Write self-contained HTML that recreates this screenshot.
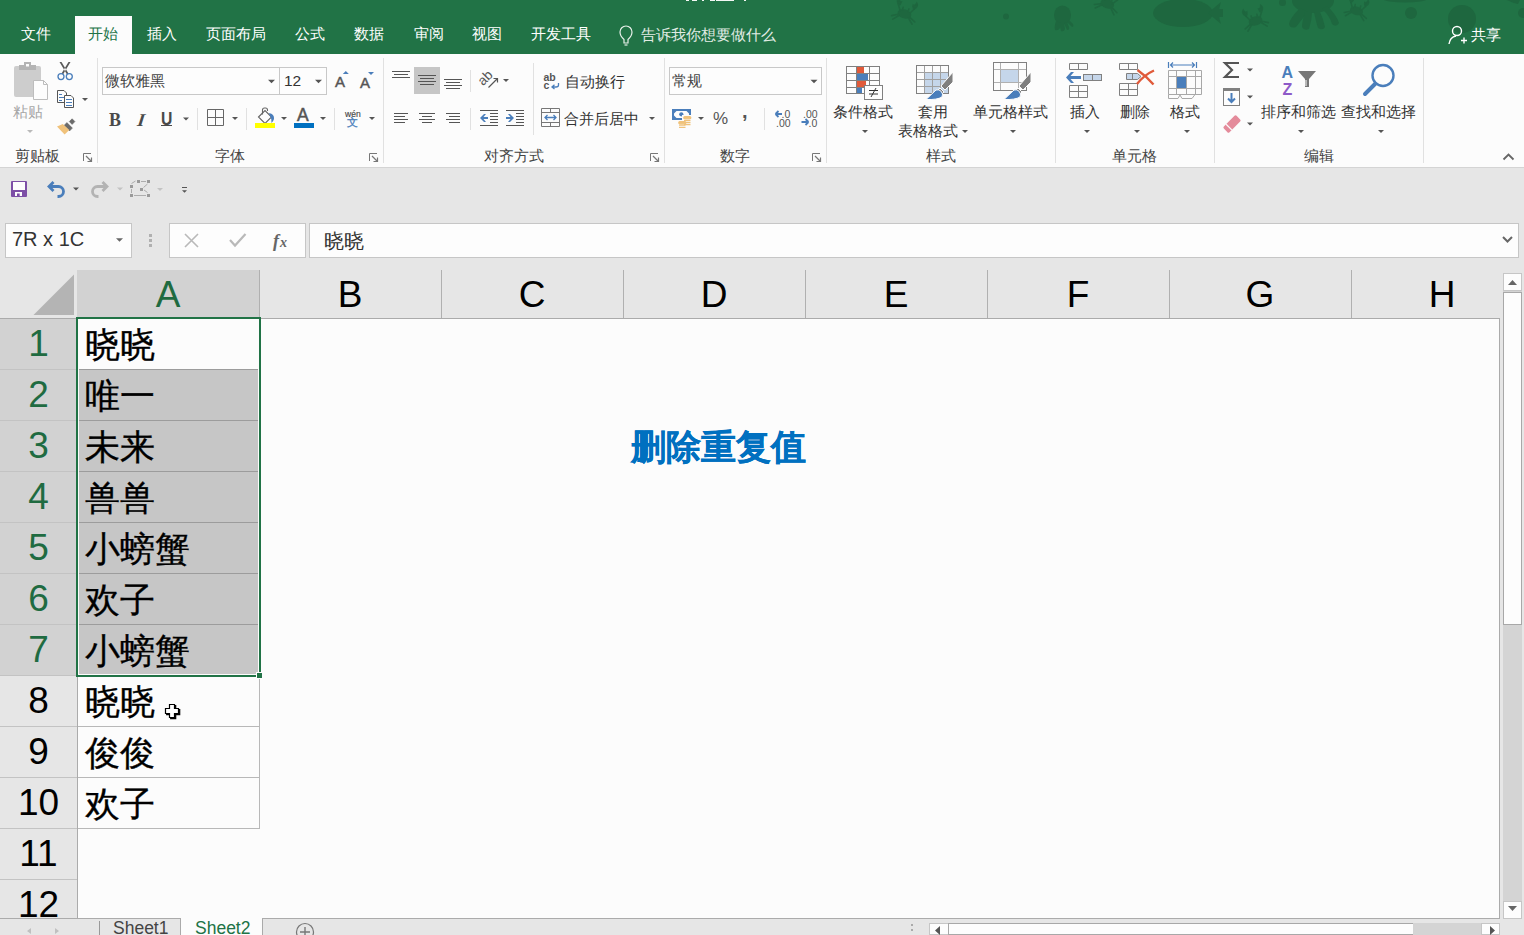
<!DOCTYPE html><html><head><meta charset="utf-8"><style>
html,body{margin:0;padding:0;width:1524px;height:935px;overflow:hidden;background:#e6e6e6;font-family:"Liberation Sans",sans-serif;}
.t{position:absolute;white-space:nowrap;line-height:1;}
.b{position:absolute;box-sizing:border-box;}
svg{position:absolute;left:0;top:0;}
</style></head><body>
<div class="b" style="left:0px;top:0px;width:1524px;height:54px;background:#217346"></div>
<div class="b" style="left:75px;top:16px;width:57px;height:38px;background:#fcfcfc"></div>
<div class="t" style="left:21px;top:26px;font-size:15px;color:#fff;font-weight:normal;">文件</div>
<div class="t" style="left:88px;top:26px;font-size:15px;color:#217346;font-weight:normal;">开始</div>
<div class="t" style="left:147px;top:26px;font-size:15px;color:#fff;font-weight:normal;">插入</div>
<div class="t" style="left:206px;top:26px;font-size:15px;color:#fff;font-weight:normal;">页面布局</div>
<div class="t" style="left:295px;top:26px;font-size:15px;color:#fff;font-weight:normal;">公式</div>
<div class="t" style="left:354px;top:26px;font-size:15px;color:#fff;font-weight:normal;">数据</div>
<div class="t" style="left:414px;top:26px;font-size:15px;color:#fff;font-weight:normal;">审阅</div>
<div class="t" style="left:472px;top:26px;font-size:15px;color:#fff;font-weight:normal;">视图</div>
<div class="t" style="left:531px;top:26px;font-size:15px;color:#fff;font-weight:normal;">开发工具</div>
<div class="t" style="left:641px;top:27px;font-size:15px;color:#e2ece5;font-weight:normal;">告诉我你想要做什么</div>
<div class="t" style="left:1471px;top:27px;font-size:15px;color:#fff;font-weight:normal;">共享</div>
<div class="b" style="left:686px;top:0px;width:3px;height:1.2px;background:#f4f8f5"></div>
<div class="b" style="left:692px;top:0px;width:5px;height:1.2px;background:#f4f8f5"></div>
<div class="b" style="left:702px;top:0px;width:2px;height:1.2px;background:#f4f8f5"></div>
<div class="b" style="left:710px;top:0px;width:5px;height:1.2px;background:#f4f8f5"></div>
<div class="b" style="left:716px;top:0px;width:18px;height:1.2px;background:#f4f8f5"></div>
<div class="b" style="left:744px;top:0px;width:2px;height:1.2px;background:#f4f8f5"></div>
<div class="b" style="left:0px;top:54px;width:1524px;height:114px;background:#fcfcfc;border-bottom:1px solid #d4d4d4"></div>
<div class="b" style="left:97px;top:58px;width:1px;height:105px;background:#e1e1e1"></div>
<div class="b" style="left:383px;top:58px;width:1px;height:105px;background:#e1e1e1"></div>
<div class="b" style="left:664px;top:58px;width:1px;height:105px;background:#e1e1e1"></div>
<div class="b" style="left:826px;top:58px;width:1px;height:105px;background:#e1e1e1"></div>
<div class="b" style="left:1055px;top:58px;width:1px;height:105px;background:#e1e1e1"></div>
<div class="b" style="left:1214px;top:58px;width:1px;height:105px;background:#e1e1e1"></div>
<div class="b" style="left:1423px;top:58px;width:1px;height:105px;background:#e1e1e1"></div>
<div class="t" style="left:15px;top:148px;font-size:15px;color:#444;font-weight:normal;">剪贴板</div>
<div class="t" style="left:215px;top:148px;font-size:15px;color:#444;font-weight:normal;">字体</div>
<div class="t" style="left:484px;top:148px;font-size:15px;color:#444;font-weight:normal;">对齐方式</div>
<div class="t" style="left:720px;top:148px;font-size:15px;color:#444;font-weight:normal;">数字</div>
<div class="t" style="left:926px;top:148px;font-size:15px;color:#444;font-weight:normal;">样式</div>
<div class="t" style="left:1112px;top:148px;font-size:15px;color:#444;font-weight:normal;">单元格</div>
<div class="t" style="left:1304px;top:148px;font-size:15px;color:#444;font-weight:normal;">编辑</div>
<div class="t" style="left:13px;top:104px;font-size:15px;color:#a6a6a6;font-weight:normal;">粘贴</div>
<div class="b" style="left:102px;top:67px;width:179px;height:28px;background:#fdfdfd;border:1px solid #c8c8c8"></div>
<div class="b" style="left:279px;top:67px;width:48px;height:28px;background:#fdfdfd;border:1px solid #c8c8c8"></div>
<div class="t" style="left:105px;top:73px;font-size:15px;color:#444;font-weight:normal;">微软雅黑</div>
<div class="t" style="left:284px;top:73px;font-size:15.5px;color:#333;font-weight:normal;">12</div>
<div class="t" style="left:335px;top:74px;font-size:15px;color:#555;font-weight:normal;-webkit-text-stroke:0.45px #555">A</div>
<div class="t" style="left:360px;top:75px;font-size:15px;color:#555;font-weight:normal;-webkit-text-stroke:0.45px #555">A</div>
<div class="t" style="left:109px;top:111px;font-size:18px;color:#4a4a4a;font-weight:bold;font-family:&quot;Liberation Serif&quot;,serif">B</div>
<div class="t" style="left:138px;top:111px;font-size:18px;color:#4a4a4a;font-weight:bold;font-family:&quot;Liberation Serif&quot;,serif;transform:skewX(-18deg)">I</div>
<div class="t" style="left:161px;top:111px;font-size:17.5px;color:#4a4a4a;font-weight:bold;font-family:&quot;Liberation Sans&quot;,sans-serif;transform:scaleX(0.9);transform-origin:left">U</div>
<div class="b" style="left:161px;top:125px;width:11px;height:1.4px;background:#4a4a4a"></div>
<div class="t" style="left:297px;top:107px;font-size:17.5px;color:#555;font-weight:normal;-webkit-text-stroke:0.5px #555">A</div>
<div class="t" style="left:344.5px;top:108.5px;font-size:9.5px;color:#444;font-weight:normal;transform:scaleX(0.9);transform-origin:left;-webkit-text-stroke:0.15px #444">wén</div>
<div class="t" style="left:346.8px;top:117.3px;font-size:11px;color:#4a7ebb;font-weight:500;-webkit-text-stroke:0.3px #4a7ebb">文</div>
<div class="t" style="left:565px;top:74px;font-size:15px;color:#333;font-weight:normal;">自动换行</div>
<div class="t" style="left:564px;top:111px;font-size:15px;color:#333;font-weight:normal;">合并后居中</div>
<div class="b" style="left:669px;top:67px;width:153px;height:28px;background:#fdfdfd;border:1px solid #c8c8c8"></div>
<div class="t" style="left:672px;top:73px;font-size:15px;color:#444;font-weight:normal;">常规</div>
<div class="t" style="left:713px;top:110px;font-size:17px;color:#555;font-weight:normal;">%</div>
<div class="t" style="left:742px;top:101px;font-size:20px;color:#555;font-weight:bold;">,</div>
<div class="t" style="left:833px;top:104px;font-size:15px;color:#333;font-weight:normal;">条件格式</div>
<div class="t" style="left:918px;top:104px;font-size:15px;color:#333;font-weight:normal;">套用</div>
<div class="t" style="left:898px;top:123px;font-size:15px;color:#333;font-weight:normal;">表格格式</div>
<div class="t" style="left:973px;top:104px;font-size:15px;color:#333;font-weight:normal;">单元格样式</div>
<div class="t" style="left:1070px;top:104px;font-size:15px;color:#333;font-weight:normal;">插入</div>
<div class="t" style="left:1120px;top:104px;font-size:15px;color:#333;font-weight:normal;">删除</div>
<div class="t" style="left:1170px;top:104px;font-size:15px;color:#333;font-weight:normal;">格式</div>
<div class="t" style="left:1261px;top:104px;font-size:15px;color:#333;font-weight:normal;">排序和筛选</div>
<div class="t" style="left:1341px;top:104px;font-size:15px;color:#333;font-weight:normal;">查找和选择</div>
<div class="b" style="left:5px;top:223px;width:127px;height:35px;background:#fdfdfd;border:1px solid #c6c6c6"></div>
<div class="t" style="left:12px;top:229px;font-size:20px;color:#333;font-weight:normal;">7R x 1C</div>
<div class="b" style="left:169px;top:223px;width:137px;height:35px;background:#fdfdfd;border:1px solid #c6c6c6"></div>
<div class="b" style="left:309px;top:223px;width:1210px;height:35px;background:#fdfdfd;border:1px solid #c6c6c6"></div>
<div class="t" style="left:324px;top:231px;font-size:20px;color:#333;font-weight:normal;">晓晓</div>
<div class="b" style="left:0px;top:270px;width:1500px;height:48px;background:#e6e6e6"></div>
<div class="b" style="left:77px;top:270px;width:183px;height:48px;background:#d2d2d2"></div>
<svg width="80" height="320" style="position:absolute;left:0;top:0"><path d="M74 274.5 V315 H33.5 Z" fill="#b4b4b4"/></svg>
<div class="b" style="left:0px;top:318px;width:1500px;height:1px;background:#ababab"></div>
<div class="t" style="left:77px;width:182px;text-align:center;top:276px;font-size:37px;color:#1f6b41">A</div>
<div class="b" style="left:259px;top:270px;width:1px;height:48px;background:#b0b0b0"></div>
<div class="t" style="left:259px;width:182px;text-align:center;top:276px;font-size:37px;color:#000">B</div>
<div class="b" style="left:441px;top:270px;width:1px;height:48px;background:#b0b0b0"></div>
<div class="t" style="left:441px;width:182px;text-align:center;top:276px;font-size:37px;color:#000">C</div>
<div class="b" style="left:623px;top:270px;width:1px;height:48px;background:#b0b0b0"></div>
<div class="t" style="left:623px;width:182px;text-align:center;top:276px;font-size:37px;color:#000">D</div>
<div class="b" style="left:805px;top:270px;width:1px;height:48px;background:#b0b0b0"></div>
<div class="t" style="left:805px;width:182px;text-align:center;top:276px;font-size:37px;color:#000">E</div>
<div class="b" style="left:987px;top:270px;width:1px;height:48px;background:#b0b0b0"></div>
<div class="t" style="left:987px;width:182px;text-align:center;top:276px;font-size:37px;color:#000">F</div>
<div class="b" style="left:1169px;top:270px;width:1px;height:48px;background:#b0b0b0"></div>
<div class="t" style="left:1169px;width:182px;text-align:center;top:276px;font-size:37px;color:#000">G</div>
<div class="b" style="left:1351px;top:270px;width:1px;height:48px;background:#b0b0b0"></div>
<div class="t" style="left:1351px;width:182px;text-align:center;top:276px;font-size:37px;color:#000">H</div>
<div class="b" style="left:78px;top:319px;width:1422px;height:599px;background:#fcfcfc"></div>
<div class="b" style="left:1499px;top:318px;width:1px;height:600px;background:#ababab"></div>
<div class="b" style="left:0px;top:319px;width:77px;height:51px;background:#d2d2d2;border-bottom:1px solid #c3c3c3"></div>
<div class="t" style="left:0px;width:77px;text-align:center;top:325px;font-size:37px;color:#1f6b41">1</div>
<div class="b" style="left:0px;top:370px;width:77px;height:51px;background:#d2d2d2;border-bottom:1px solid #c3c3c3"></div>
<div class="t" style="left:0px;width:77px;text-align:center;top:376px;font-size:37px;color:#1f6b41">2</div>
<div class="b" style="left:0px;top:421px;width:77px;height:51px;background:#d2d2d2;border-bottom:1px solid #c3c3c3"></div>
<div class="t" style="left:0px;width:77px;text-align:center;top:427px;font-size:37px;color:#1f6b41">3</div>
<div class="b" style="left:0px;top:472px;width:77px;height:51px;background:#d2d2d2;border-bottom:1px solid #c3c3c3"></div>
<div class="t" style="left:0px;width:77px;text-align:center;top:478px;font-size:37px;color:#1f6b41">4</div>
<div class="b" style="left:0px;top:523px;width:77px;height:51px;background:#d2d2d2;border-bottom:1px solid #c3c3c3"></div>
<div class="t" style="left:0px;width:77px;text-align:center;top:529px;font-size:37px;color:#1f6b41">5</div>
<div class="b" style="left:0px;top:574px;width:77px;height:51px;background:#d2d2d2;border-bottom:1px solid #c3c3c3"></div>
<div class="t" style="left:0px;width:77px;text-align:center;top:580px;font-size:37px;color:#1f6b41">6</div>
<div class="b" style="left:0px;top:625px;width:77px;height:51px;background:#d2d2d2;border-bottom:1px solid #c3c3c3"></div>
<div class="t" style="left:0px;width:77px;text-align:center;top:631px;font-size:37px;color:#1f6b41">7</div>
<div class="b" style="left:0px;top:676px;width:77px;height:51px;background:#e6e6e6;border-bottom:1px solid #c3c3c3"></div>
<div class="t" style="left:0px;width:77px;text-align:center;top:682px;font-size:37px;color:#000">8</div>
<div class="b" style="left:0px;top:727px;width:77px;height:51px;background:#e6e6e6;border-bottom:1px solid #c3c3c3"></div>
<div class="t" style="left:0px;width:77px;text-align:center;top:733px;font-size:37px;color:#000">9</div>
<div class="b" style="left:0px;top:778px;width:77px;height:51px;background:#e6e6e6;border-bottom:1px solid #c3c3c3"></div>
<div class="t" style="left:0px;width:77px;text-align:center;top:784px;font-size:37px;color:#000">10</div>
<div class="b" style="left:0px;top:829px;width:77px;height:51px;background:#e6e6e6;border-bottom:1px solid #c3c3c3"></div>
<div class="t" style="left:0px;width:77px;text-align:center;top:835px;font-size:37px;color:#000">11</div>
<div class="b" style="left:0px;top:880px;width:77px;height:51px;background:#e6e6e6;border-bottom:1px solid #c3c3c3"></div>
<div class="t" style="left:0px;width:77px;text-align:center;top:886px;font-size:37px;color:#000">12</div>
<div class="b" style="left:77px;top:318px;width:1px;height:600px;background:#ababab"></div>
<div class="b" style="left:78px;top:319px;width:182px;height:51px;background:#fcfcfc;border-bottom:1px solid #9c9c9c;border-right:1px solid #b8b8b8"></div>
<div class="t" style="left:85px;top:327px;font-size:35px;color:#000;font-weight:500;-webkit-text-stroke:0.35px #000">晓晓</div>
<div class="b" style="left:78px;top:370px;width:182px;height:51px;background:#c6c6c6;border-bottom:1px solid #9c9c9c;border-right:1px solid #b8b8b8"></div>
<div class="t" style="left:85px;top:378px;font-size:35px;color:#000;font-weight:500;-webkit-text-stroke:0.35px #000">唯一</div>
<div class="b" style="left:78px;top:421px;width:182px;height:51px;background:#c6c6c6;border-bottom:1px solid #9c9c9c;border-right:1px solid #b8b8b8"></div>
<div class="t" style="left:85px;top:429px;font-size:35px;color:#000;font-weight:500;-webkit-text-stroke:0.35px #000">未来</div>
<div class="b" style="left:78px;top:472px;width:182px;height:51px;background:#c6c6c6;border-bottom:1px solid #9c9c9c;border-right:1px solid #b8b8b8"></div>
<div class="t" style="left:85px;top:480px;font-size:35px;color:#000;font-weight:500;-webkit-text-stroke:0.35px #000">兽兽</div>
<div class="b" style="left:78px;top:523px;width:182px;height:51px;background:#c6c6c6;border-bottom:1px solid #9c9c9c;border-right:1px solid #b8b8b8"></div>
<div class="t" style="left:85px;top:531px;font-size:35px;color:#000;font-weight:500;-webkit-text-stroke:0.35px #000">小螃蟹</div>
<div class="b" style="left:78px;top:574px;width:182px;height:51px;background:#c6c6c6;border-bottom:1px solid #9c9c9c;border-right:1px solid #b8b8b8"></div>
<div class="t" style="left:85px;top:582px;font-size:35px;color:#000;font-weight:500;-webkit-text-stroke:0.35px #000">欢子</div>
<div class="b" style="left:78px;top:625px;width:182px;height:51px;background:#c6c6c6;border-bottom:1px solid #9c9c9c;border-right:1px solid #b8b8b8"></div>
<div class="t" style="left:85px;top:633px;font-size:35px;color:#000;font-weight:500;-webkit-text-stroke:0.35px #000">小螃蟹</div>
<div class="b" style="left:78px;top:676px;width:182px;height:51px;background:#fcfcfc;border-bottom:1px solid #b8b8b8;border-right:1px solid #b8b8b8"></div>
<div class="t" style="left:85px;top:684px;font-size:35px;color:#000;font-weight:500;-webkit-text-stroke:0.35px #000">晓晓</div>
<div class="b" style="left:78px;top:727px;width:182px;height:51px;background:#fcfcfc;border-bottom:1px solid #b8b8b8;border-right:1px solid #b8b8b8"></div>
<div class="t" style="left:85px;top:735px;font-size:35px;color:#000;font-weight:500;-webkit-text-stroke:0.35px #000">俊俊</div>
<div class="b" style="left:78px;top:778px;width:182px;height:51px;background:#fcfcfc;border-bottom:1px solid #b8b8b8;border-right:1px solid #b8b8b8"></div>
<div class="t" style="left:85px;top:786px;font-size:35px;color:#000;font-weight:500;-webkit-text-stroke:0.35px #000">欢子</div>
<div class="b" style="left:78px;top:319px;width:181px;height:356px;border:1px solid #fcfcfc"></div>
<div class="b" style="left:76px;top:317px;width:185px;height:360px;border:2px solid #217346"></div>
<div class="b" style="left:256px;top:672px;width:7px;height:7px;background:#217346;border:1px solid #fcfcfc"></div>
<div class="t" style="left:631px;top:429px;font-size:35px;color:#0070c0;font-weight:bold;-webkit-text-stroke:0.3px #0070c0">删除重复值</div>
<div class="b" style="left:0px;top:918px;width:1524px;height:17px;background:#e6e6e6"></div>
<div class="b" style="left:0px;top:918px;width:1500px;height:1px;background:#ababab"></div>
<div class="b" style="left:181px;top:918px;width:81px;height:17px;background:#fcfcfc"></div>
<div class="b" style="left:180px;top:919px;width:1px;height:16px;background:#aaa"></div>
<div class="b" style="left:262px;top:919px;width:1px;height:16px;background:#aaa"></div>
<div class="t" style="left:113px;top:920px;font-size:17.5px;color:#444;font-weight:normal;">Sheet1</div>
<div class="t" style="left:195px;top:920px;font-size:17.5px;color:#217346;font-weight:normal;">Sheet2</div>
<div class="b" style="left:929px;top:923px;width:20px;height:12px;background:#fdfdfd;border:1px solid #c6c6c6"></div>
<div class="b" style="left:948px;top:923px;width:466px;height:12px;background:#fdfdfd;border:1px solid #a8a8a8"></div>
<div class="b" style="left:1413px;top:923px;width:68px;height:12px;background:#d4d4d4"></div>
<div class="b" style="left:1481px;top:923px;width:19px;height:12px;background:#fdfdfd;border:1px solid #c6c6c6"></div>
<div class="b" style="left:1500px;top:270px;width:24px;height:648px;background:#e6e6e6"></div>
<div class="b" style="left:1503px;top:273px;width:19px;height:18px;background:#fdfdfd;border:1px solid #c6c6c6"></div>
<div class="b" style="left:1503px;top:291px;width:19px;height:611px;background:#d4d4d4"></div>
<div class="b" style="left:1503px;top:292px;width:19px;height:333px;background:#fdfdfd;border:1px solid #a8a8a8"></div>
<div class="b" style="left:1503px;top:901px;width:19px;height:18px;background:#fdfdfd;border:1px solid #c6c6c6"></div>
<svg width="1524" height="935" viewBox="0 0 1524 935"><rect x="11" y="181" width="16" height="16" rx="1" fill="#7d4fa6"/><rect x="13" y="182" width="12" height="8" fill="#fdfdfd"/><rect x="15" y="192" width="7" height="4" fill="#fdfdfd"/><rect x="17" y="193.5" width="2.7" height="2.5" fill="#7d4fa6"/><path d="M50 186.5 H58.5 A5 5 0 0 1 58.5 196.5 H57.5" stroke="#4a7ebb" stroke-width="2.8" fill="none"/><path d="M53.5 182 L49 186.5 L53.5 191" stroke="#4a7ebb" stroke-width="2.8" fill="none"/><path d="M73.0 187.5h6l-3.0 3.0z" fill="#555"/><path d="M106 186.5 H97.5 A5 5 0 0 0 97.5 196.5 H98.5" stroke="#b3b3b3" stroke-width="2.8" fill="none"/><path d="M102.5 182 L107 186.5 L102.5 191" stroke="#b3b3b3" stroke-width="2.8" fill="none"/><path d="M117.0 187.5h6l-3.0 3.0z" fill="#c3c3c3"/><g fill="#9a9a9a"><rect x="137" y="180" width="3" height="3"/><rect x="147" y="180" width="3" height="3"/><rect x="130" y="185" width="3" height="3"/><rect x="140" y="188" width="3" height="3"/><rect x="130" y="194" width="3" height="3"/><rect x="147" y="194" width="3" height="3"/></g><path d="M141 181.5 H146 M131.5 189 V193 M134 195.5 H146 M131.5 183.5 L135.5 181 M147.5 184 L143.5 187.5 M144 190 L147.5 192.5" stroke="#a6a6a6" stroke-width="0.9" fill="none"/><path d="M157.0 188.0h6l-3.0 3.0z" fill="#c3c3c3"/><rect x="182" y="187" width="5" height="1" fill="#555"/><path d="M182.0 190.25h5l-2.5 2.5z" fill="#555"/><rect x="14" y="66" width="27" height="31" rx="2" fill="#cdcdcd"/><rect x="19" y="65" width="17" height="5" fill="#b4b4b4"/><rect x="24" y="62" width="7" height="4" fill="#b4b4b4"/><rect x="26" y="64" width="3" height="2.5" fill="#fcfcfc"/><path d="M33.5 80.5 H43.5 L47.5 84.5 V99.5 H33.5 Z" fill="#fdfdfd" stroke="#bdbdbd"/><path d="M43.5 80.5 V84.5 H47.5" fill="none" stroke="#bdbdbd"/><path d="M27.0 130.0h6l-3.0 3.0z" fill="#b9b9b9"/><path d="M59.5 62 L61.5 62 L68.5 73.5 L67 74.5 Z M70.5 62 L68.5 62 L61.5 73.5 L63 74.5 Z" fill="#5a5a5a"/><circle cx="61" cy="76.6" r="3" stroke="#4a7ebb" stroke-width="1.3" fill="none"/><circle cx="69.3" cy="76.6" r="3" stroke="#4a7ebb" stroke-width="1.3" fill="none"/><path d="M57.5 90.5 H64 L66.5 93 V102.5 H57.5 Z" fill="#fdfdfd" stroke="#555"/><path d="M59 94.5 h3 M59 97.5 h5 M59 100.5 h3" stroke="#4a7ebb"/><path d="M64.5 95.5 H71 L73.5 98 V107.5 H64.5 Z" fill="#fdfdfd" stroke="#555"/><path d="M66 99.5 h6 M66 102.5 h6 M66 105.5 h6" stroke="#4a7ebb"/><path d="M82.0 98.0h6l-3.0 3.0z" fill="#555"/><path d="M66.9 122.6 L72.4 128.1 L69.6 130.9 L64.1 125.4 Z" fill="#6b6b6b" stroke="#6b6b6b" stroke-width="0.6" stroke-linejoin="round"/><path d="M69.3 121.6 L72.1 118.8 L74.9 121.6 L72.1 124.4 Z" fill="#6b6b6b" stroke="#6b6b6b" stroke-width="0.6" stroke-linejoin="round"/><path d="M57 126.5 L62.8 124 L69.3 130 L64.6 134.5 Z" fill="#f0c27b"/><path d="M83.5 161V153.5H91" stroke="#777" fill="none" stroke-width="1"/><path d="M86 156L91 161M91.5 157.5V161.5H87.5" stroke="#777" fill="none" stroke-width="1.2"/><path d="M268.0 79.75h7l-3.5 3.5z" fill="#555"/><path d="M315.0 79.75h7l-3.5 3.5z" fill="#555"/><path d="M345.8 71 l3 3 h-6z" fill="#4a7ebb"/><path d="M368 72 h6 l-3 3z" fill="#4a7ebb"/><path d="M183.0 117.5h6l-3.0 3.0z" fill="#555"/><rect x="197" y="108" width="1" height="22" fill="#e1e1e1"/><path d="M207.5 109.5 H223.5 V125.5 H207.5 Z M215.5 109.5 V125.5 M207.5 117.5 H223.5" stroke="#666" fill="none"/><path d="M232.0 117.0h6l-3.0 3.0z" fill="#555"/><rect x="246" y="108" width="1" height="22" fill="#e1e1e1"/><path d="M258.5 117 L265 110.5 L271.5 117 L265 123.5 Z" fill="#fdfdfd" stroke="#666" stroke-width="1.1"/><path d="M262.5 114.5 V110 Q262.5 108 264.5 108 H265.5 Q267.5 108 267.5 110 V111" stroke="#666" stroke-width="1.1" fill="none"/><path d="M269 113 Q274.5 114 274 119 Q273.5 121 271.5 123 Q272 119 270 116 Z" fill="#4a7ebb"/><rect x="255" y="123" width="20" height="5" fill="#ffff00"/><path d="M281.0 117.0h6l-3.0 3.0z" fill="#555"/><rect x="294" y="123" width="20" height="5" fill="#0070c0"/><path d="M320.0 117.0h6l-3.0 3.0z" fill="#555"/><rect x="334" y="108" width="1" height="22" fill="#e1e1e1"/><path d="M369.0 117.0h6l-3.0 3.0z" fill="#555"/><path d="M369.5 161V153.5H377" stroke="#777" fill="none" stroke-width="1"/><path d="M372 156L377 161M377.5 157.5V161.5H373.5" stroke="#777" fill="none" stroke-width="1.2"/><rect x="414" y="67" width="26" height="27" fill="#c6c6c6"/><rect x="392" y="71" width="18" height="1" fill="#555"/><rect x="394" y="74" width="14" height="1" fill="#555"/><rect x="392" y="77" width="18" height="1" fill="#555"/><rect x="418" y="75" width="18" height="1" fill="#555"/><rect x="420" y="78" width="14" height="1" fill="#555"/><rect x="418" y="81" width="18" height="1" fill="#555"/><rect x="420" y="84" width="14" height="1" fill="#555"/><rect x="444" y="79" width="18" height="1" fill="#555"/><rect x="446" y="82" width="14" height="1" fill="#555"/><rect x="444" y="85" width="18" height="1" fill="#555"/><rect x="446" y="88" width="14" height="1" fill="#555"/><rect x="394" y="113" width="14" height="1" fill="#555"/><rect x="394" y="116" width="11" height="1" fill="#555"/><rect x="394" y="119" width="14" height="1" fill="#555"/><rect x="394" y="122" width="11" height="1" fill="#555"/><rect x="419" y="113" width="16" height="1" fill="#555"/><rect x="422" y="116" width="10" height="1" fill="#555"/><rect x="419" y="119" width="16" height="1" fill="#555"/><rect x="422" y="122" width="10" height="1" fill="#555"/><rect x="446" y="113" width="14" height="1" fill="#555"/><rect x="449" y="116" width="11" height="1" fill="#555"/><rect x="446" y="119" width="14" height="1" fill="#555"/><rect x="449" y="122" width="11" height="1" fill="#555"/><rect x="470" y="70" width="1" height="22" fill="#e1e1e1"/><rect x="470" y="108" width="1" height="22" fill="#e1e1e1"/><g transform="translate(485 77) rotate(-45)"><text x="-8" y="5" font-family="Liberation Sans" font-size="13.5" fill="#555">ab</text></g><path d="M488.5 87.5 L497 79 M493.5 78.5 H497.5 V82.5" stroke="#555" stroke-width="1.2" fill="none"/><path d="M503.0 79.0h6l-3.0 3.0z" fill="#555"/><rect x="480" y="110" width="18" height="1" fill="#555"/><rect x="480" y="125" width="18" height="1" fill="#555"/><rect x="490" y="113" width="8" height="1" fill="#555"/><rect x="490" y="116" width="8" height="1" fill="#555"/><rect x="490" y="119" width="8" height="1" fill="#555"/><rect x="490" y="122" width="8" height="1" fill="#555"/><path d="M480 118 L484 114 H486 L483.5 117 H488 V119 H483.5 L486 122 H484 Z" fill="#4a7ebb"/><rect x="506" y="110" width="18" height="1" fill="#555"/><rect x="506" y="125" width="18" height="1" fill="#555"/><rect x="516" y="113" width="8" height="1" fill="#555"/><rect x="516" y="116" width="8" height="1" fill="#555"/><rect x="516" y="119" width="8" height="1" fill="#555"/><rect x="516" y="122" width="8" height="1" fill="#555"/><path d="M514 118 L510 114 H508 L510.5 117 H506 V119 H510.5 L508 122 H510 Z" fill="#4a7ebb"/><rect x="533" y="63" width="1" height="72" fill="#e1e1e1"/><text x="543.5" y="80.5" font-family="Liberation Sans" font-size="10.5" fill="#555" font-weight="bold">ab</text><text x="543.5" y="88.8" font-family="Liberation Sans" font-size="10.5" fill="#555" font-weight="bold">c</text><path d="M558.5 83 V85 Q558.5 87 556 87 H552.5 M554.5 84.8 L552 87 L554.5 89" stroke="#4a7ebb" stroke-width="1.3" fill="none"/><path d="M541.5 108.5 H559.5 V126.5 H541.5 Z M541.5 112.5 H559.5 M541.5 122.5 H559.5 M550.5 108.5 V112.5 M550.5 122.5 V126.5" stroke="#777" fill="none"/><path d="M545 117.5 H556 M547.5 115 L545 117.5 L547.5 120 M553.5 115 L556 117.5 L553.5 120" stroke="#4a7ebb" stroke-width="1.3" fill="none"/><path d="M649.0 117.0h6l-3.0 3.0z" fill="#555"/><path d="M650.5 161V153.5H658" stroke="#777" fill="none" stroke-width="1"/><path d="M653 156L658 161M658.5 157.5V161.5H654.5" stroke="#777" fill="none" stroke-width="1.2"/><path d="M810.5 79.75h7l-3.5 3.5z" fill="#555"/><rect x="673" y="110" width="17" height="9" fill="none" stroke="#4a7ebb" stroke-width="2"/><circle cx="681.3" cy="114.3" r="2.1" fill="#4a7ebb"/><path d="M674 111 h2.5 l-2.5 2.5z M689 111 h-2.5 l2.5 2.5z M674 118 h2.5 l-2.5 -2.5z" fill="#4a7ebb"/><rect x="682" y="115" width="10" height="14" fill="#fcfcfc"/><rect x="677" y="120" width="10" height="9" fill="#fcfcfc"/><g fill="none" stroke="#f0c27b" stroke-width="1.3"><rect x="683.8" y="116.6" width="7" height="2.2" rx="1.1" fill="#f0c27b"/><path d="M684 120.6 h6.5 M684 122.6 h6.5 M684 124.6 h6.5"/><rect x="678.8" y="121.6" width="7" height="2.2" rx="1.1" fill="#f0c27b"/><path d="M679 125.2 h6.5 M679 127.4 h6.5"/></g><path d="M698.0 117.0h6l-3.0 3.0z" fill="#555"/><rect x="764" y="108" width="1" height="22" fill="#e1e1e1"/><path d="M775.5 114 L778.5 111 M775.5 114 L778.5 117 M775.5 114 H782" stroke="#4a7ebb" stroke-width="1.8" fill="none"/><path d="M808.5 122 L805.5 119 M808.5 122 L805.5 125 M808.5 122 H801.5" stroke="#4a7ebb" stroke-width="1.8" fill="none"/><text x="781.5" y="118" font-family="Liberation Sans" font-size="10.5" fill="#555">.0</text><text x="776" y="126.5" font-family="Liberation Sans" font-size="10.5" fill="#555">.00</text><text x="803" y="118" font-family="Liberation Sans" font-size="10.5" fill="#555">.00</text><text x="808.5" y="126.5" font-family="Liberation Sans" font-size="10.5" fill="#555">.0</text><path d="M812.5 161V153.5H820" stroke="#777" fill="none" stroke-width="1"/><path d="M815 156L820 161M820.5 157.5V161.5H816.5" stroke="#777" fill="none" stroke-width="1.2"/><g stroke="#808080" fill="none"><rect x="846.5" y="66.5" width="33" height="27" fill="#fdfdfd"/><path d="M856.5 66.5 V93.5 M869.5 66.5 V93.5 M846.5 73.5 H879.5 M846.5 80.5 H879.5 M846.5 87.5 H879.5"/></g><rect x="857" y="67" width="7" height="6" fill="#e05a3a"/><rect x="857" y="74" width="11" height="6" fill="#4a7ebb"/><rect x="857" y="81" width="9" height="6" fill="#e05a3a"/><rect x="857" y="88" width="5" height="5" fill="#4a7ebb"/><rect x="864.5" y="85.5" width="18" height="14" fill="#fdfdfd" stroke="#808080"/><path d="M869 90.5 H878 M869 94 H878 M876 88 L871 97" stroke="#333" stroke-width="1"/><path d="M862.0 130.0h6l-3.0 3.0z" fill="#555"/><rect x="925" y="73" width="24" height="21" fill="#c5d6ea"/><g stroke="#a0a0a0" fill="none"><path d="M924.5 65.5 V93.5 M932.5 65.5 V93.5 M940.5 65.5 V93.5 M916.5 72.5 H948.5 M916.5 79.5 H948.5 M916.5 86.5 H948.5"/></g><rect x="916.5" y="65.5" width="32" height="28" fill="none" stroke="#808080"/><path d="M953 72 L953 82 L945 90 L941 86 Z" fill="#7f7f7f" stroke="#fcfcfc" stroke-width="1"/><path d="M940 88 L944 92 L941 95 L937 91 Z" fill="#7f7f7f" stroke="#fcfcfc" stroke-width="1"/><path d="M926 99.5 L936 90 A5 5 0 0 1 942 97 Q937 100 926 99.5 Z" fill="#4a7ebb" stroke="#fcfcfc" stroke-width="1"/><path d="M962.0 130.0h6l-3.0 3.0z" fill="#555"/><rect x="1000" y="69" width="19" height="14" fill="#c5d6ea"/><g stroke="#b0b0b0" fill="none"><path d="M1000.5 62.5 V90.5 M1018.5 62.5 V90.5 M993.5 69.5 H1026.5 M993.5 82.5 H1026.5"/></g><rect x="993.5" y="62.5" width="33" height="28" fill="none" stroke="#808080"/><path d="M1031 72 L1031 82 L1023 90 L1019 86 Z" fill="#7f7f7f" stroke="#fcfcfc" stroke-width="1"/><path d="M1018 88 L1022 92 L1019 95 L1015 91 Z" fill="#7f7f7f" stroke="#fcfcfc" stroke-width="1"/><path d="M1004 99.5 L1014 90 A5 5 0 0 1 1020 97 Q1015 100 1004 99.5 Z" fill="#4a7ebb" stroke="#fcfcfc" stroke-width="1"/><path d="M1010.0 130.0h6l-3.0 3.0z" fill="#555"/><path d="M1069.5 63.5 H1087.5 V69.5 H1069.5 Z M1078.5 63.5 V69.5" stroke="#808080" fill="none"/><rect x="1083.5" y="74.5" width="18" height="6" fill="#c5d6ea" stroke="#808080"/><path d="M1092.5 74.5 V80.5" stroke="#808080" fill="none"/><path d="M1066 77.5 L1071 72 H1074 L1070.5 76 H1081 V79 H1070.5 L1074 83 H1071 Z" fill="#4a7ebb"/><path d="M1069.5 85.5 H1087.5 V97.5 H1069.5 Z M1078.5 85.5 V97.5 M1069.5 91.5 H1087.5" stroke="#808080" fill="none"/><path d="M1084.0 130.0h6l-3.0 3.0z" fill="#555"/><path d="M1119.5 63.5 H1137.5 V69.5 H1119.5 Z M1128.5 63.5 V69.5" stroke="#808080" fill="none"/><path d="M1126.5 73.5 H1137.5 L1141 76.5 L1137.5 79.5 H1126.5 Z" fill="#c5d6ea" stroke="#808080"/><path d="M1132.5 73.5 V79.5" stroke="#808080" fill="none"/><path d="M1119.5 83.5 H1137.5 V95.5 H1119.5 Z M1128.5 83.5 V95.5 M1119.5 89.5 H1137.5" stroke="#808080" fill="none"/><path d="M1137.5 70 Q1146 76 1153.5 84.5 M1154 70.5 Q1144 75 1137 84" stroke="#e05a3a" stroke-width="2.4" fill="none"/><path d="M1134.0 130.0h6l-3.0 3.0z" fill="#555"/><path d="M1168.5 62 V68 M1196.5 62 V68 M1170.5 65 H1194.5 M1173 62.5 L1170.5 65 L1173 67.5 M1192 62.5 L1194.5 65 L1192 67.5" stroke="#4a7ebb" stroke-width="1.2" fill="none"/><rect x="1177" y="77" width="9" height="11" fill="#4a7ebb"/><path d="M1168.5 70.5 H1201.5 V94.5 H1168.5 Z M1176.5 70.5 V94.5 M1186.5 70.5 V94.5 M1195.5 70.5 V94.5 M1168.5 76.5 H1201.5 M1168.5 88.5 H1201.5" stroke="#a8a8a8" fill="none"/><path d="M1168.5 94.5 V98.5 H1178 L1180 95 L1182 98.5 H1192 L1195 94.5" stroke="#a8a8a8" fill="none"/><path d="M1184.0 130.0h6l-3.0 3.0z" fill="#555"/><path d="M1239 63 H1225 L1232 70 L1225 77 H1239" stroke="#555" stroke-width="2.2" fill="none" stroke-linejoin="miter"/><path d="M1247.0 68.5h6l-3.0 3.0z" fill="#555"/><rect x="1223.5" y="88.5" width="16" height="17" fill="#fdfdfd" stroke="#808080"/><rect x="1223" y="88" width="17" height="3" fill="#808080"/><path d="M1231.5 93 V102 M1228 98.5 L1231.5 102 L1235 98.5" stroke="#4a7ebb" stroke-width="2" fill="none"/><path d="M1247.0 95.5h6l-3.0 3.0z" fill="#555"/><g transform="translate(1232 124) rotate(-45)"><rect x="-9" y="-4" width="18" height="8" rx="1.5" fill="#e48b9b"/><rect x="-5" y="-4" width="1.3" height="8" fill="#fcfcfc"/></g><path d="M1247.0 122.5h6l-3.0 3.0z" fill="#555"/><text x="1281.5" y="77.5" font-family="Liberation Sans" font-size="16" font-weight="bold" fill="#4a7ebb">A</text><text x="1282.5" y="94.5" font-family="Liberation Sans" font-size="16" font-weight="bold" fill="#8e5ac8">Z</text><path d="M1298 71 H1316 L1309 79 V87 H1305 V79 Z" fill="#777"/><path d="M1306 80 V86" stroke="#fcfcfc" stroke-width="1"/><path d="M1298.0 130.0h6l-3.0 3.0z" fill="#555"/><circle cx="1383" cy="75.5" r="10.5" stroke="#4a7ebb" stroke-width="2.4" fill="none"/><path d="M1375 84 L1365 94" stroke="#4a7ebb" stroke-width="4" stroke-linecap="round"/><path d="M1378.0 130.0h6l-3.0 3.0z" fill="#555"/><path d="M1503.5 159.5 L1508.5 154.5 L1513.5 159.5" stroke="#666" stroke-width="1.8" fill="none"/><rect x="149" y="234" width="3" height="3" fill="#b0b0b0"/><rect x="149" y="239" width="3" height="3" fill="#b0b0b0"/><rect x="149" y="244" width="3" height="3" fill="#b0b0b0"/><path d="M185 234 L198 247 M198 234 L185 247" stroke="#b9b9b9" stroke-width="1.6"/><path d="M230 240 L235 245.5 L245.5 234" stroke="#b9b9b9" stroke-width="2.2" fill="none"/><text x="273" y="247" font-family="Liberation Serif" font-size="18" font-style="italic" font-weight="bold" fill="#666">f<tspan font-size="14" dx="1">x</tspan></text><path d="M116.0 238.25h7l-3.5 3.5z" fill="#666"/><path d="M1503 237 L1507.5 241.5 L1512 237" stroke="#666" stroke-width="2" fill="none"/><g transform="translate(905 12) rotate(15) scale(1.0)" fill="#1e673f" stroke="#1e673f" stroke-linecap="round"><ellipse cx="0" cy="2" rx="7" ry="4.5" stroke="none"/><path d="M-5 0 L-8 -5 M5 0 L8 -5 M-6 4 L-12 7 M-5 5 L-10 10 M6 4 L12 7 M5 5 L10 10" stroke-width="1.6" fill="none"/><path d="M-8 -5 Q-12 -9 -9 -12 Q-8 -8 -6 -9 Q-6 -6 -8 -5Z M8 -5 Q12 -9 9 -12 Q8 -8 6 -9 Q6 -6 8 -5Z" stroke-width="1.2"/><path d="M-3 -1 V-4 M3 -1 V-4" stroke-width="1.6"/></g><g transform="translate(1108 2) rotate(20) scale(1.0)" fill="#1e673f" stroke="#1e673f" stroke-linecap="round"><ellipse cx="0" cy="2" rx="7" ry="4.5" stroke="none"/><path d="M-5 0 L-8 -5 M5 0 L8 -5 M-6 4 L-12 7 M-5 5 L-10 10 M6 4 L12 7 M5 5 L10 10" stroke-width="1.6" fill="none"/><path d="M-8 -5 Q-12 -9 -9 -12 Q-8 -8 -6 -9 Q-6 -6 -8 -5Z M8 -5 Q12 -9 9 -12 Q8 -8 6 -9 Q6 -6 8 -5Z" stroke-width="1.2"/><path d="M-3 -1 V-4 M3 -1 V-4" stroke-width="1.6"/></g><g transform="translate(1255 19) rotate(-15) scale(1.0)" fill="#1e673f" stroke="#1e673f" stroke-linecap="round"><ellipse cx="0" cy="2" rx="7" ry="4.5" stroke="none"/><path d="M-5 0 L-8 -5 M5 0 L8 -5 M-6 4 L-12 7 M-5 5 L-10 10 M6 4 L12 7 M5 5 L10 10" stroke-width="1.6" fill="none"/><path d="M-8 -5 Q-12 -9 -9 -12 Q-8 -8 -6 -9 Q-6 -6 -8 -5Z M8 -5 Q12 -9 9 -12 Q8 -8 6 -9 Q6 -6 8 -5Z" stroke-width="1.2"/><path d="M-3 -1 V-4 M3 -1 V-4" stroke-width="1.6"/></g><g transform="translate(1357 9) rotate(15) scale(0.95)" fill="#1e673f" stroke="#1e673f" stroke-linecap="round"><ellipse cx="0" cy="2" rx="7" ry="4.5" stroke="none"/><path d="M-5 0 L-8 -5 M5 0 L8 -5 M-6 4 L-12 7 M-5 5 L-10 10 M6 4 L12 7 M5 5 L10 10" stroke-width="1.6" fill="none"/><path d="M-8 -5 Q-12 -9 -9 -12 Q-8 -8 -6 -9 Q-6 -6 -8 -5Z M8 -5 Q12 -9 9 -12 Q8 -8 6 -9 Q6 -6 8 -5Z" stroke-width="1.2"/><path d="M-3 -1 V-4 M3 -1 V-4" stroke-width="1.6"/></g><g fill="#1e673f"><ellipse cx="1183" cy="13" rx="30" ry="14"/><path d="M1208 13 L1221 2 Q1217 13 1221 24 Z"/><path d="M1219 9 h4 v8 h-4z"/><ellipse cx="1313" cy="1" rx="21" ry="12"/><path d="M1300 8 Q1290 18 1289 24 Q1290 29 1296 27 Q1303 18 1308 12 Z"/><path d="M1305 12 Q1302 22 1302 27 Q1304 31 1309 29 Q1312 20 1312 12 Z"/><path d="M1314 12 Q1316 22 1318 28 Q1323 31 1325 27 Q1323 18 1320 12 Z"/><path d="M1322 9 Q1330 16 1332 24 Q1336 28 1339 23 Q1336 14 1327 6 Z"/><circle cx="1411" cy="13" r="6"/><circle cx="1462" cy="19" r="14"/><circle cx="1282.5" cy="2.5" r="3.5"/><circle cx="1006" cy="16.5" r="3"/><ellipse cx="1405" cy="-1" rx="22" ry="3.5"/><circle cx="1523" cy="13" r="5"/><ellipse cx="1062.5" cy="15" rx="8.5" ry="9.5"/><path d="M1056 21 Q1054 27 1055 30 Q1058 31 1060 28 L1061 23Z M1060 23 Q1060 28 1061 31 Q1064 32 1065 29 L1064 23Z M1064 23 Q1066 28 1067 30 Q1070 30 1069 27 L1067 22Z M1067 22 Q1070 25 1072 27 Q1074 27 1073 24 L1069 20Z"/><path d="M1503 -2 Q1512 3 1518 4 L1520 0 Z"/></g><circle cx="1457" cy="31" r="4.5" stroke="#fff" stroke-width="1.4" fill="none"/><path d="M1449 44 Q1450 37 1456 36" stroke="#fff" stroke-width="1.4" fill="none"/><path d="M1461 40.5 H1467 M1464 37.5 V43.5" stroke="#fff" stroke-width="1.4"/><path d="M624 43 V39.5 Q620 36 620 32 A6 6 0 0 1 632 32 Q632 36 628 39.5 V43 Z" stroke="#e8f0ea" stroke-width="1.2" fill="none"/><path d="M624.5 45 H627.5" stroke="#e8f0ea" stroke-width="1.2"/><circle cx="305" cy="932" r="8.5" stroke="#777" stroke-width="1.2" fill="none"/><path d="M305 927 V937 M300 932 H310" stroke="#777" stroke-width="1.4"/><path d="M31 928 L27 931 L31 934 Z M55 928 L59 931 L55 934 Z" fill="#c0c0c0"/><rect x="99" y="921" width="1" height="14" fill="#999"/><path d="M170.7 705.7 H175.7 V709.7 H179.7 V714.7 H175.7 V718.7 H170.7 V714.7 H166.7 V709.7 H170.7 Z" fill="#000" stroke="#000" stroke-width="1.2"/><path d="M169.5 704.5 H174.5 V708.5 H178.5 V713.5 H174.5 V717.5 H169.5 V713.5 H165.5 V708.5 H169.5 Z" fill="#fff" stroke="#000" stroke-width="1.2"/><path d="M1508 285 L1512.5 280 L1517 285 Z" fill="#666"/><path d="M1508 906 L1512.5 911 L1517 906 Z" fill="#666"/><path d="M940 926 L935 930.5 L940 935 Z M1490 926 L1495 930.5 L1490 935 Z" fill="#555"/><rect x="911" y="924" width="2" height="2" fill="#aaa"/><rect x="911" y="929" width="2" height="2" fill="#aaa"/></svg>
</body></html>
